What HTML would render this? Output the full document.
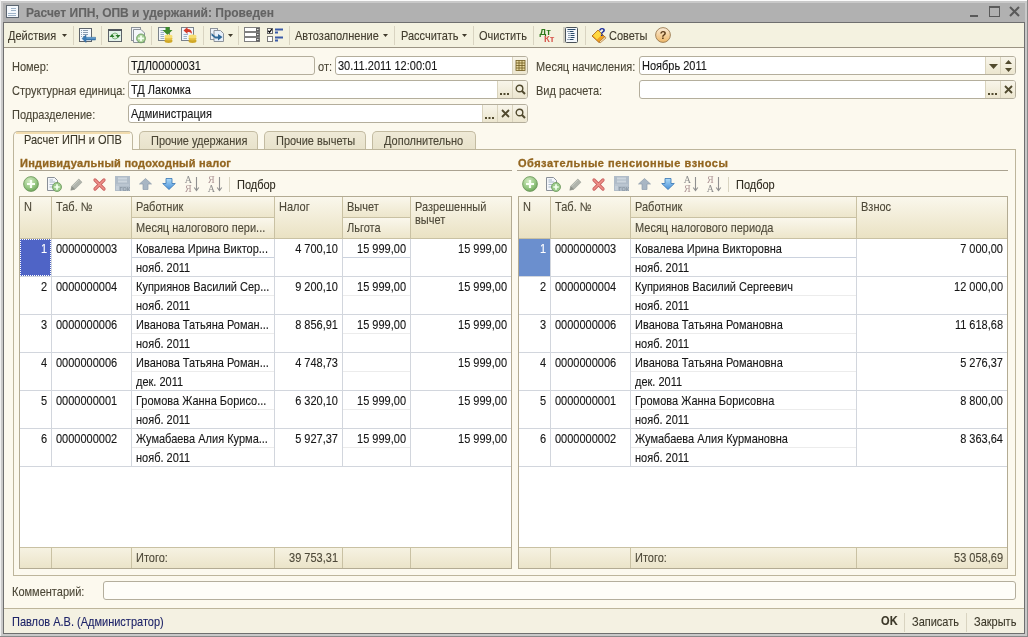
<!DOCTYPE html><html><head><meta charset="utf-8"><style>
*{margin:0;padding:0;box-sizing:border-box}
html,body{width:1028px;height:637px;overflow:hidden;background:#fff}
body{position:relative;font-family:"Liberation Sans",sans-serif;font-size:11px}
.t{position:absolute;white-space:nowrap;line-height:13px;font-size:11px;color:#4a4535}
.d{position:absolute;white-space:nowrap;line-height:13px;font-size:11px;color:#161616}
.h{position:absolute;white-space:nowrap;line-height:13px;font-size:11px;color:#4d4838}
.fld{position:absolute;height:19px;border:1px solid #b4ae9c;border-radius:3px;background:#fff;overflow:hidden}
.btn{position:absolute;top:0;bottom:0;width:15px;border-left:1px solid #d9d3bd;background:linear-gradient(#f8f5ea,#ece6cf)}
.sep{position:absolute;top:26px;width:1px;height:19px;background:#d9d4c1}
svg{position:absolute;overflow:visible}
#root{position:absolute;left:0;top:0;width:1028px;height:637px;will-change:transform}
#root div{-webkit-text-stroke-width:0.1px}
.t,.d,.h{transform:scaleY(1.1);transform-origin:0 0}
</style></head><body><div id="root">
<div style="position:absolute;left:0px;top:0px;width:1028px;height:637px;background:#d4d4d4"></div>
<div style="position:absolute;left:1px;top:1px;width:1026px;height:635px;background:#c9c9c9"></div>
<div style="position:absolute;left:3px;top:3px;width:1022px;height:20px;background:#b1b1b1"></div>
<div style="position:absolute;left:3px;top:22px;width:1022px;height:612px;background:#6f6f6f"></div>
<div style="position:absolute;left:4px;top:23px;width:1020px;height:610px;background:#fcf9ee"></div>
<div style="position:absolute;left:0px;top:0px;width:1028px;height:1px;background:#fafafa"></div>
<div style="position:absolute;left:0px;top:0px;width:1px;height:637px;background:#f0f0f0"></div>
<div style="position:absolute;left:1027px;top:0px;width:1px;height:637px;background:#8a8a8a"></div>
<div style="position:absolute;left:0px;top:636px;width:1028px;height:1px;background:#8a8a8a"></div>
<svg style="left:6px;top:5px" width="13" height="13" viewBox="0 0 13 13"><rect x="0.5" y="0.5" width="12" height="12" fill="#f4f8fc" stroke="#5c6670"/><g stroke="#9fb4c8" stroke-width="1"><line x1="5" y1="3.5" x2="10" y2="3.5"/><line x1="5" y1="5.5" x2="10" y2="5.5"/><line x1="2" y1="8.5" x2="10" y2="8.5"/><line x1="2" y1="10.5" x2="10" y2="10.5"/></g></svg>
<div style="position:absolute;left:26px;top:7px;font:bold 12px 'Liberation Sans';line-height:13px;color:#636363;white-space:nowrap;-webkit-text-stroke-width:0.1px">Расчет ИПН, ОПВ и удержаний: Проведен</div>
<svg style="left:970px;top:6px" width="50" height="12" viewBox="0 0 50 12"><rect x="0" y="9" width="8" height="2" fill="#5a5a5a"/><rect x="19.5" y="0.5" width="10" height="10" fill="none" stroke="#5a5a5a"/><rect x="19" y="0" width="11" height="2" fill="#5a5a5a"/><path d="M40 1 L49 10 M49 1 L40 10" stroke="#5a5a5a" stroke-width="2"/></svg>
<div style="position:absolute;left:4px;top:23px;width:1020px;height:24px;background:#f4f2e0"></div>
<div style="position:absolute;left:4px;top:47px;width:1020px;height:1px;background:#9c9584"></div>
<div class="t" style="left:8px;top:29px;color:#403b2c">Действия</div>
<svg style="left:62px;top:34px" width="5" height="3" viewBox="0 0 5 3"><path d="M0 0H5L2.5 3Z" fill="#403b2c"/></svg>
<div class="sep" style="left:73px"></div>
<div class="sep" style="left:101px"></div>
<div class="sep" style="left:151px"></div>
<div class="sep" style="left:203px"></div>
<div class="sep" style="left:238px"></div>
<div class="sep" style="left:289px"></div>
<div class="sep" style="left:394px"></div>
<div class="sep" style="left:473px"></div>
<div class="sep" style="left:533px"></div>
<div class="sep" style="left:585px"></div>
<div style="position:absolute;left:79px;top:28px"><svg style="left:0;top:0" width="17" height="15" viewBox="0 0 17 15"><rect x="0.5" y="0.5" width="12" height="13" fill="#f4f8fc" stroke="#5e646a"/><g stroke="#8a9cb0" stroke-dasharray="1 1 5 9"><line x1="2" y1="2.5" x2="10" y2="2.5"/><line x1="2" y1="4.5" x2="10" y2="4.5"/><line x1="2" y1="6.5" x2="10" y2="6.5"/><line x1="2" y1="8.5" x2="6" y2="8.5"/></g><path d="M3 10.5 L7 7 V9.3 H16.5 V12 H7 V14.5 Z" fill="#3a7ab4" stroke="#2c6496" stroke-width="0.5"/><rect x="7.5" y="9.5" width="8.5" height="1" fill="#7ab0d8"/></svg></div>
<div style="position:absolute;left:108px;top:29px"><svg style="left:0;top:0" width="14" height="13" viewBox="0 0 14 13"><rect x="0.5" y="0.5" width="13" height="12" fill="#e4f2ea" stroke="#5c6268"/><rect x="0" y="0" width="14" height="2" fill="#50565c"/><circle cx="7" cy="7" r="3" fill="#d8f0d4" stroke="#6aaa6a" stroke-width="0.8"/><path d="M1.5 8 L4 5 L6.5 8Z M7.5 6 L10 9 L12.5 6Z" fill="#2a7a2a"/></svg></div>
<div style="position:absolute;left:131px;top:27px"><svg style="left:0;top:0" width="16" height="16" viewBox="0 0 16 16"><rect x="0.5" y="0.5" width="9" height="13" fill="#eef1f6" stroke="#8c9299"/><path d="M2.5 2.5 H10 L13.5 6 V15.5 H2.5 Z" fill="#f4f6fa" stroke="#8c9299"/><circle cx="10" cy="11.4" r="4.4" fill="#a8d098" stroke="#6a9a5a" stroke-width="0.9"/><path d="M10 8.5V14.3M7.1 11.4H12.9" stroke="#f4fff0" stroke-width="1.8"/></svg></div>
<div style="position:absolute;left:158px;top:27px"><svg style="left:0;top:0" width="16" height="16" viewBox="0 0 16 16"><rect x="0.5" y="0.5" width="11" height="13" fill="#f2f6fb" stroke="#7a828a"/><g stroke="#9ab0c8"><line x1="2.5" y1="3.5" x2="7" y2="3.5"/><line x1="2.5" y1="5.5" x2="6" y2="5.5"/><line x1="2.5" y1="7.5" x2="6" y2="7.5"/><line x1="2.5" y1="9.5" x2="6" y2="9.5"/><line x1="2.5" y1="11.5" x2="6" y2="11.5"/></g><path d="M7.5 0 H11.5 V3 H14.5 L9.5 8 L4.5 3 H7.5Z" fill="#3c8a2c"/><ellipse cx="10.5" cy="14" rx="4" ry="1.9" fill="#d0a828"/><ellipse cx="10.5" cy="11.6" rx="4" ry="1.9" fill="#e4c040"/><ellipse cx="10.5" cy="9.4" rx="4" ry="1.9" fill="#f6de70"/></svg></div>
<div style="position:absolute;left:181px;top:27px"><svg style="left:0;top:0" width="16" height="16" viewBox="0 0 16 16"><rect x="0.5" y="0.5" width="12" height="13" fill="#f2f6fb" stroke="#7a828a"/><g stroke="#9ab0c8"><line x1="2.5" y1="7.5" x2="7" y2="7.5"/><line x1="2.5" y1="9.5" x2="6" y2="9.5"/><line x1="2.5" y1="11.5" x2="6" y2="11.5"/></g><path d="M2.5 3.5 L6.5 0 V2 C9.5 2 11 3.5 11 7 C10 5.5 8.8 5 6.5 5 V7 Z" fill="#d43a2a"/><ellipse cx="11.5" cy="14" rx="4" ry="1.9" fill="#d0a828"/><ellipse cx="11.5" cy="11.6" rx="4" ry="1.9" fill="#e4c040"/><ellipse cx="11.5" cy="9.4" rx="4" ry="1.9" fill="#f6de70"/></svg></div>
<div style="position:absolute;left:210px;top:28px"><svg style="left:0;top:0" width="15" height="14" viewBox="0 0 15 14"><rect x="0.5" y="0.5" width="7" height="11" fill="#eef2f8" stroke="#8c9299"/><path d="M4 2.5 H10.5 L13.5 5.5 V13.5 H4Z" fill="#e6eef8" stroke="#8c9299"/><path d="M1.5 5 L5.5 8.5 H8 V6 L12.5 9 L8 12.5 V10.5 H5.5 L1.5 7.5Z" fill="#2e6898"/></svg></div>
<div style="position:absolute;left:244px;top:27px"><svg style="left:0;top:0" width="16" height="15" viewBox="0 0 16 15"><g fill="#fff" stroke="#808080"><rect x="0.5" y="0.5" width="15" height="4"/><rect x="0.5" y="5.5" width="15" height="4"/><rect x="0.5" y="10.5" width="15" height="4"/></g><g fill="#606060"><rect x="12" y="1" width="3.5" height="3.5"/><rect x="12" y="6" width="3.5" height="3.5"/><rect x="12" y="11" width="3.5" height="3.5"/></g><g fill="#fff"><path d="M12.7 2H14.8L13.75 3.2Z"/><path d="M12.7 7H14.8L13.75 8.2Z"/><path d="M12.7 12H14.8L13.75 13.2Z"/></g></svg></div>
<div style="position:absolute;left:267px;top:28px"><svg style="left:0;top:0" width="16" height="14" viewBox="0 0 16 14"><rect x="0.5" y="0.5" width="5" height="5" fill="#fff" stroke="#6a6a6a"/><path d="M1.3 2.8 L2.6 4.3 L4.8 1.2" stroke="#000" stroke-width="1.3" fill="none"/><rect x="0.5" y="8.5" width="5" height="5" fill="#fff" stroke="#7a7a7a"/><g fill="#3a5aa8"><rect x="8" y="0.5" width="8" height="2"/><rect x="8" y="3.5" width="3" height="2"/><rect x="8" y="8.5" width="8" height="2"/><rect x="8" y="11.5" width="3" height="2"/></g></svg></div>
<div style="position:absolute;left:539px;top:27px"><svg style="left:0;top:0" width="17" height="16" viewBox="0 0 17 16"><text x="0.5" y="7.8" font-family="Liberation Sans" font-weight="bold" font-size="9.5" fill="#2f7a1c">Дт</text><text x="5" y="15" font-family="Liberation Sans" font-weight="bold" font-size="9.5" fill="#d85a50">Кт</text></svg></div>
<div style="position:absolute;left:563px;top:27px"><svg style="left:0;top:0" width="16" height="16" viewBox="0 0 16 16"><rect x="0" y="0" width="2" height="16" fill="#cfcdc0"/><rect x="2.5" y="0.5" width="12" height="15" rx="1" fill="#f4f8fc" stroke="#4a5258"/><g fill="#2a4a6a"><rect x="4.5" y="2" width="8" height="1"/><rect x="4.5" y="4" width="1" height="1"/><rect x="6.5" y="4" width="4" height="1"/><rect x="5.5" y="6" width="1" height="1"/><rect x="7.5" y="6" width="4" height="1"/><rect x="5.5" y="8" width="1" height="1"/><rect x="7.5" y="8" width="4" height="1"/><rect x="5.5" y="10" width="1" height="1"/><rect x="7.5" y="10" width="4" height="1"/><rect x="4.5" y="12" width="1" height="1"/><rect x="6.5" y="12" width="4" height="1"/></g></svg></div>
<div style="position:absolute;left:591px;top:26px"><svg style="left:0;top:0" width="17" height="17" viewBox="0 0 17 17"><path d="M1 10 L7 4 L14 11 L8 16.5 Z" fill="#f0a020" stroke="#a05a10" stroke-width="0.8"/><path d="M2 9.5 L7 4.5 L11 8.5 L6 13.5Z" fill="#ffd840"/><path d="M8 16 L14 10.5 L15 12 L9 17Z" fill="#f8e8c0" stroke="#a05a10" stroke-width="0.6"/><text x="7.5" y="10" font-family="Liberation Sans" font-weight="bold" font-size="11.5" fill="#1a2a9a">?</text></svg></div>
<div style="position:absolute;left:655px;top:27px"><svg style="left:0;top:0" width="16" height="16" viewBox="0 0 16 16"><defs><linearGradient id="hg" x1="0" y1="0" x2="0" y2="1"><stop offset="0" stop-color="#faecd8"/><stop offset="1" stop-color="#eeb868"/></linearGradient></defs><circle cx="8" cy="8" r="7.4" fill="url(#hg)" stroke="#9a7a50" stroke-width="0.9"/><text x="8" y="12" text-anchor="middle" font-family="Liberation Sans" font-weight="bold" font-size="11" fill="#5a3a18">?</text></svg></div>
<svg style="left:228px;top:34px" width="5" height="3" viewBox="0 0 5 3"><path d="M0 0H5L2.5 3Z" fill="#403b2c"/></svg>
<div class="t" style="left:295px;top:29px;color:#403b2c">Автозаполнение</div>
<svg style="left:383px;top:34px" width="5" height="3" viewBox="0 0 5 3"><path d="M0 0H5L2.5 3Z" fill="#403b2c"/></svg>
<div class="t" style="left:401px;top:29px;color:#403b2c">Рассчитать</div>
<svg style="left:462px;top:34px" width="5" height="3" viewBox="0 0 5 3"><path d="M0 0H5L2.5 3Z" fill="#403b2c"/></svg>
<div class="t" style="left:479px;top:29px;color:#403b2c">Очистить</div>
<div class="t" style="left:609px;top:29px;color:#403b2c">Советы</div>
<div class="t" style="left:12px;top:60px;">Номер:</div>
<div class="t" style="left:12px;top:84px;">Структурная единица:</div>
<div class="t" style="left:12px;top:108px;">Подразделение:</div>
<div class="t" style="left:318px;top:60px;">от:</div>
<div class="t" style="left:536px;top:60px;">Месяц начисления:</div>
<div class="t" style="left:536px;top:84px;">Вид расчета:</div>
<div class="fld" style="left:128px;top:56px;width:187px;background:#fbf8ef">
<div class="d" style="left:2px;top:2px">ТДЛ00000031</div>
</div>
<div class="fld" style="left:335px;top:56px;width:193px;background:#fff">
<div class="d" style="left:2px;top:2px">30.11.2011 12:00:01</div>
<div class="btn" style="left:176px"><svg style="left:2px;top:3px" width="11" height="11" viewBox="0 0 11 11"><rect x="1" y="0.5" width="9" height="10" fill="#e8d9a0" stroke="#6f5a20" stroke-width="0.8"/><g stroke="#6f5a20" stroke-width="0.8"><line x1="1" y1="3" x2="10" y2="3"/><line x1="1" y1="5.5" x2="10" y2="5.5"/><line x1="1" y1="8" x2="10" y2="8"/><line x1="4" y1="0.5" x2="4" y2="10.5"/><line x1="7" y1="0.5" x2="7" y2="10.5"/></g></svg></div>
</div>
<div class="fld" style="left:128px;top:80px;width:400px;background:#fff">
<div class="d" style="left:2px;top:2px">ТД Лакомка</div>
<div class="btn" style="left:383px"><svg style="left:2px;top:3px" width="11" height="11" viewBox="0 0 11 11"><circle cx="4.5" cy="4.5" r="3.3" fill="none" stroke="#514a2e" stroke-width="1.4"/><path d="M7 7L10 10" stroke="#514a2e" stroke-width="2"/></svg></div>
<div class="btn" style="left:368px"><svg style="left:2px;top:12px" width="9" height="2"><rect x="0" y="0" width="2" height="2" fill="#514a2e"/><rect x="3.5" y="0" width="2" height="2" fill="#514a2e"/><rect x="7" y="0" width="2" height="2" fill="#514a2e"/></svg></div>
</div>
<div class="fld" style="left:128px;top:104px;width:400px;background:#fff">
<div class="d" style="left:2px;top:2px">Администрация</div>
<div class="btn" style="left:383px"><svg style="left:2px;top:3px" width="11" height="11" viewBox="0 0 11 11"><circle cx="4.5" cy="4.5" r="3.3" fill="none" stroke="#514a2e" stroke-width="1.4"/><path d="M7 7L10 10" stroke="#514a2e" stroke-width="2"/></svg></div>
<div class="btn" style="left:368px"><svg style="left:3px;top:4px" width="9" height="9" viewBox="0 0 9 9"><path d="M1 1L8 8M8 1L1 8" stroke="#514a2e" stroke-width="1.8"/></svg></div>
<div class="btn" style="left:353px"><svg style="left:2px;top:12px" width="9" height="2"><rect x="0" y="0" width="2" height="2" fill="#514a2e"/><rect x="3.5" y="0" width="2" height="2" fill="#514a2e"/><rect x="7" y="0" width="2" height="2" fill="#514a2e"/></svg></div>
</div>
<div class="fld" style="left:639px;top:56px;width:377px;background:#fff">
<div class="d" style="left:2px;top:2px">Ноябрь 2011</div>
<div class="btn" style="left:360px"><svg style="left:4px;top:3px" width="7" height="12" viewBox="0 0 7 12"><path d="M0 4H7L3.5 0Z M0 8H7L3.5 12Z" fill="#514a2e"/></svg></div>
<div class="btn" style="left:345px"><svg style="left:3px;top:7px" width="9" height="5" viewBox="0 0 9 5"><path d="M0 0H9L4.5 5Z" fill="#514a2e"/></svg></div>
</div>
<div class="fld" style="left:639px;top:80px;width:377px;background:#fff">
<div class="btn" style="left:360px"><svg style="left:3px;top:4px" width="9" height="9" viewBox="0 0 9 9"><path d="M1 1L8 8M8 1L1 8" stroke="#514a2e" stroke-width="1.8"/></svg></div>
<div class="btn" style="left:345px"><svg style="left:2px;top:12px" width="9" height="2"><rect x="0" y="0" width="2" height="2" fill="#514a2e"/><rect x="3.5" y="0" width="2" height="2" fill="#514a2e"/><rect x="7" y="0" width="2" height="2" fill="#514a2e"/></svg></div>
</div>
<div style="position:absolute;left:13px;top:149px;width:1003px;height:427px;border:1px solid #bdb59b;background:#fcf9ee"></div>
<div style="position:absolute;left:139px;top:131px;width:119px;height:18px;border:1px solid #c3bba1;border-bottom:none;border-radius:5px 5px 0 0;background:linear-gradient(#efead7,#e8e2cb)"></div>
<div class="t" style="left:151px;top:134px;color:#4a4535">Прочие удержания</div>
<div style="position:absolute;left:264px;top:131px;width:102px;height:18px;border:1px solid #c3bba1;border-bottom:none;border-radius:5px 5px 0 0;background:linear-gradient(#efead7,#e8e2cb)"></div>
<div class="t" style="left:276px;top:134px;color:#4a4535">Прочие вычеты</div>
<div style="position:absolute;left:372px;top:131px;width:104px;height:18px;border:1px solid #c3bba1;border-bottom:none;border-radius:5px 5px 0 0;background:linear-gradient(#efead7,#e8e2cb)"></div>
<div class="t" style="left:384px;top:134px;color:#4a4535">Дополнительно</div>
<div style="position:absolute;left:13px;top:131px;width:120px;height:19px;border:1px solid #bfb79e;border-bottom:none;border-radius:5px 5px 0 0;background:#fcf9ee"></div>
<div style="position:absolute;left:16px;top:132px;width:114px;height:2px;background:#f2dcae"></div>
<div class="t" style="left:24px;top:133px;color:#3c3829">Расчет ИПН и ОПВ</div>
<div style="position:absolute;left:20px;top:157px;font:bold 11px 'Liberation Sans';line-height:13px;color:#936620;white-space:nowrap;letter-spacing:0.25px;-webkit-text-stroke-width:0.3px">Индивидуальный подоходный налог</div>
<div style="position:absolute;left:19px;top:170px;width:493px;height:1px;background:#aaa290"></div>
<div style="position:absolute;left:518px;top:157px;font:bold 11px 'Liberation Sans';line-height:13px;color:#936620;white-space:nowrap;letter-spacing:0.5px;-webkit-text-stroke-width:0.3px">Обязательные пенсионные взносы</div>
<div style="position:absolute;left:517px;top:170px;width:491px;height:1px;background:#aaa290"></div>
<div style="position:absolute;left:23px;top:176px"><svg style="left:0;top:0" width="16" height="16" viewBox="0 0 16 16"><defs><radialGradient id="pg0" cx="0.4" cy="0.3" r="0.75"><stop offset="0" stop-color="#d4ecc4"/><stop offset="0.6" stop-color="#98c884"/><stop offset="1" stop-color="#6aa258"/></radialGradient></defs><circle cx="8" cy="8" r="7.4" fill="url(#pg0)" stroke="#6a9458" stroke-width="0.8"/><path d="M8 4V12M4 8H12" stroke="#f8fff4" stroke-width="2.2"/></svg></div>
<div style="position:absolute;left:47px;top:177px"><svg style="left:0;top:0" width="15" height="15" viewBox="0 0 15 15"><path d="M0.5 0.5H7.5L10.5 3.5V13.5H0.5Z" fill="#f4f6fa" stroke="#8a9098"/><g stroke="#a8b8c8"><line x1="2.5" y1="3" x2="6" y2="3"/><line x1="2.5" y1="5" x2="8" y2="5"/><line x1="2.5" y1="7.5" x2="6" y2="7.5"/><line x1="2.5" y1="10" x2="6" y2="10"/></g><circle cx="10" cy="10" r="4.5" fill="#9ccc8c" stroke="#6a9458" stroke-width="0.8"/><path d="M10 7.3V12.7M7.3 10H12.7" stroke="#f4fff0" stroke-width="1.7"/></svg></div>
<div style="position:absolute;left:70px;top:178px"><svg style="left:0;top:0" width="13" height="13" viewBox="0 0 13 13"><path d="M0.8 12.2 L1.8 8 L8.8 1 L12 4.2 L5 11.2 Z" fill="#b0b4ac" stroke="#9a9e96" stroke-width="0.6"/><path d="M0.8 12.2L1.8 8L5 11.2Z" fill="#8e928a"/><path d="M2.5 8.5L9 2" stroke="#c8ccc4" stroke-width="0.8"/></svg></div>
<div style="position:absolute;left:93px;top:178px"><svg style="left:0;top:0" width="13" height="13" viewBox="0 0 13 13"><path d="M2 2L11 11M11 2L2 11" stroke="#c86060" stroke-width="3.2" stroke-linecap="round"/><path d="M2 2L11 11M11 2L2 11" stroke="#f09088" stroke-width="1.6" stroke-linecap="round"/></svg></div>
<div style="position:absolute;left:115px;top:176px"><svg style="left:0;top:0" width="15" height="15" viewBox="0 0 15 15"><rect x="0" y="0" width="15" height="15" fill="#b0bcc8"/><rect x="3" y="1.5" width="9" height="5" fill="#cdd6de"/><rect x="3" y="3.5" width="9" height="1" fill="#b0bcc8"/><rect x="1" y="8.5" width="13" height="1" fill="#c4ced8"/><rect x="1" y="10" width="3" height="4" fill="#c4ced8"/><text x="4.5" y="14.5" font-family="Liberation Sans" font-weight="bold" font-size="5.5" fill="#8c98a4">ГОК</text></svg></div>
<div style="position:absolute;left:139px;top:178px"><svg style="left:0;top:0" width="13" height="12" viewBox="0 0 13 12"><path d="M6.5 0.5L12.5 6H9V11.5H4V6H0.5Z" fill="#a8b6c4" stroke="#8e9cac" stroke-width="0.7"/></svg></div>
<div style="position:absolute;left:162px;top:178px"><svg style="left:0;top:0" width="14" height="12" viewBox="0 0 14 12"><defs><linearGradient id="dg0" x1="0" y1="0" x2="0" y2="1"><stop offset="0" stop-color="#b0dcf8"/><stop offset="1" stop-color="#4890d8"/></linearGradient></defs><path d="M4 0.5H10V5.5H13.3L7 11.5L0.7 5.5H4Z" fill="url(#dg0)" stroke="#3474b4" stroke-width="0.8"/></svg></div>
<div style="position:absolute;left:185px;top:176px"><svg style="left:0;top:0" width="14" height="16" viewBox="0 0 14 16"><text x="-0.3" y="7.3" font-family="Liberation Serif" font-size="10" fill="#8c8c8c">A</text><text x="0" y="15.5" font-family="Liberation Serif" font-size="10" fill="#b09898">Я</text><path d="M11.5 1V14M9.2 11.5L11.5 14.5L13.8 11.5" stroke="#909090" stroke-width="1.1" fill="none"/></svg></div>
<div style="position:absolute;left:208px;top:176px"><svg style="left:0;top:0" width="14" height="16" viewBox="0 0 14 16"><text x="0" y="7.3" font-family="Liberation Serif" font-size="10" fill="#b09898">Я</text><text x="-0.3" y="15.5" font-family="Liberation Serif" font-size="10" fill="#8c8c8c">A</text><path d="M11.5 1V14M9.2 11.5L11.5 14.5L13.8 11.5" stroke="#909090" stroke-width="1.1" fill="none"/></svg></div>
<div class="sep" style="left:229px;top:177px;height:15px"></div>
<div class="t" style="left:237px;top:178px;color:#2f2b20">Подбор</div>
<div style="position:absolute;left:522px;top:176px"><svg style="left:0;top:0" width="16" height="16" viewBox="0 0 16 16"><defs><radialGradient id="pg499" cx="0.4" cy="0.3" r="0.75"><stop offset="0" stop-color="#d4ecc4"/><stop offset="0.6" stop-color="#98c884"/><stop offset="1" stop-color="#6aa258"/></radialGradient></defs><circle cx="8" cy="8" r="7.4" fill="url(#pg499)" stroke="#6a9458" stroke-width="0.8"/><path d="M8 4V12M4 8H12" stroke="#f8fff4" stroke-width="2.2"/></svg></div>
<div style="position:absolute;left:546px;top:177px"><svg style="left:0;top:0" width="15" height="15" viewBox="0 0 15 15"><path d="M0.5 0.5H7.5L10.5 3.5V13.5H0.5Z" fill="#f4f6fa" stroke="#8a9098"/><g stroke="#a8b8c8"><line x1="2.5" y1="3" x2="6" y2="3"/><line x1="2.5" y1="5" x2="8" y2="5"/><line x1="2.5" y1="7.5" x2="6" y2="7.5"/><line x1="2.5" y1="10" x2="6" y2="10"/></g><circle cx="10" cy="10" r="4.5" fill="#9ccc8c" stroke="#6a9458" stroke-width="0.8"/><path d="M10 7.3V12.7M7.3 10H12.7" stroke="#f4fff0" stroke-width="1.7"/></svg></div>
<div style="position:absolute;left:569px;top:178px"><svg style="left:0;top:0" width="13" height="13" viewBox="0 0 13 13"><path d="M0.8 12.2 L1.8 8 L8.8 1 L12 4.2 L5 11.2 Z" fill="#b0b4ac" stroke="#9a9e96" stroke-width="0.6"/><path d="M0.8 12.2L1.8 8L5 11.2Z" fill="#8e928a"/><path d="M2.5 8.5L9 2" stroke="#c8ccc4" stroke-width="0.8"/></svg></div>
<div style="position:absolute;left:592px;top:178px"><svg style="left:0;top:0" width="13" height="13" viewBox="0 0 13 13"><path d="M2 2L11 11M11 2L2 11" stroke="#c86060" stroke-width="3.2" stroke-linecap="round"/><path d="M2 2L11 11M11 2L2 11" stroke="#f09088" stroke-width="1.6" stroke-linecap="round"/></svg></div>
<div style="position:absolute;left:614px;top:176px"><svg style="left:0;top:0" width="15" height="15" viewBox="0 0 15 15"><rect x="0" y="0" width="15" height="15" fill="#b0bcc8"/><rect x="3" y="1.5" width="9" height="5" fill="#cdd6de"/><rect x="3" y="3.5" width="9" height="1" fill="#b0bcc8"/><rect x="1" y="8.5" width="13" height="1" fill="#c4ced8"/><rect x="1" y="10" width="3" height="4" fill="#c4ced8"/><text x="4.5" y="14.5" font-family="Liberation Sans" font-weight="bold" font-size="5.5" fill="#8c98a4">ГОК</text></svg></div>
<div style="position:absolute;left:638px;top:178px"><svg style="left:0;top:0" width="13" height="12" viewBox="0 0 13 12"><path d="M6.5 0.5L12.5 6H9V11.5H4V6H0.5Z" fill="#a8b6c4" stroke="#8e9cac" stroke-width="0.7"/></svg></div>
<div style="position:absolute;left:661px;top:178px"><svg style="left:0;top:0" width="14" height="12" viewBox="0 0 14 12"><defs><linearGradient id="dg499" x1="0" y1="0" x2="0" y2="1"><stop offset="0" stop-color="#b0dcf8"/><stop offset="1" stop-color="#4890d8"/></linearGradient></defs><path d="M4 0.5H10V5.5H13.3L7 11.5L0.7 5.5H4Z" fill="url(#dg499)" stroke="#3474b4" stroke-width="0.8"/></svg></div>
<div style="position:absolute;left:684px;top:176px"><svg style="left:0;top:0" width="14" height="16" viewBox="0 0 14 16"><text x="-0.3" y="7.3" font-family="Liberation Serif" font-size="10" fill="#8c8c8c">A</text><text x="0" y="15.5" font-family="Liberation Serif" font-size="10" fill="#b09898">Я</text><path d="M11.5 1V14M9.2 11.5L11.5 14.5L13.8 11.5" stroke="#909090" stroke-width="1.1" fill="none"/></svg></div>
<div style="position:absolute;left:707px;top:176px"><svg style="left:0;top:0" width="14" height="16" viewBox="0 0 14 16"><text x="0" y="7.3" font-family="Liberation Serif" font-size="10" fill="#b09898">Я</text><text x="-0.3" y="15.5" font-family="Liberation Serif" font-size="10" fill="#8c8c8c">A</text><path d="M11.5 1V14M9.2 11.5L11.5 14.5L13.8 11.5" stroke="#909090" stroke-width="1.1" fill="none"/></svg></div>
<div class="sep" style="left:728px;top:177px;height:15px"></div>
<div class="t" style="left:736px;top:178px;color:#2f2b20">Подбор</div>
<div style="position:absolute;left:19px;top:196px;width:493px;height:373px;background:#fff;border:1px solid #b3ab93"></div>
<div style="position:absolute;left:20px;top:197px;width:31px;height:41px;background:linear-gradient(#faf7ec,#eae2c3)"></div>
<div class="h" style="left:24px;top:200px;">N</div>
<div style="position:absolute;left:52px;top:197px;width:79px;height:41px;background:linear-gradient(#faf7ec,#eae2c3)"></div>
<div class="h" style="left:56px;top:200px;">Таб. №</div>
<div style="position:absolute;left:51px;top:197px;width:1px;height:41px;background:#c9c1a3"></div>
<div style="position:absolute;left:132px;top:197px;width:142px;height:20px;background:linear-gradient(#faf7ec,#ede6cb)"></div>
<div style="position:absolute;left:132px;top:217px;width:142px;height:1px;background:#c9c1a3"></div>
<div style="position:absolute;left:132px;top:218px;width:142px;height:20px;background:linear-gradient(#faf7ec,#ede6cb)"></div>
<div class="h" style="left:136px;top:200px;">Работник</div>
<div class="h" style="left:136px;top:221px;">Месяц налогового пери...</div>
<div style="position:absolute;left:131px;top:197px;width:1px;height:41px;background:#c9c1a3"></div>
<div style="position:absolute;left:275px;top:197px;width:67px;height:41px;background:linear-gradient(#faf7ec,#eae2c3)"></div>
<div class="h" style="left:279px;top:200px;">Налог</div>
<div style="position:absolute;left:274px;top:197px;width:1px;height:41px;background:#c9c1a3"></div>
<div style="position:absolute;left:343px;top:197px;width:67px;height:20px;background:linear-gradient(#faf7ec,#ede6cb)"></div>
<div style="position:absolute;left:343px;top:217px;width:67px;height:1px;background:#c9c1a3"></div>
<div style="position:absolute;left:343px;top:218px;width:67px;height:20px;background:linear-gradient(#faf7ec,#ede6cb)"></div>
<div class="h" style="left:347px;top:200px;">Вычет</div>
<div class="h" style="left:347px;top:221px;">Льгота</div>
<div style="position:absolute;left:342px;top:197px;width:1px;height:41px;background:#c9c1a3"></div>
<div style="position:absolute;left:411px;top:197px;width:100px;height:41px;background:linear-gradient(#faf7ec,#eae2c3)"></div>
<div class="h" style="left:415px;top:200px;">Разрешенный</div>
<div class="h" style="left:415px;top:213px;">вычет</div>
<div style="position:absolute;left:410px;top:197px;width:1px;height:41px;background:#c9c1a3"></div>
<div style="position:absolute;left:20px;top:238px;width:491px;height:1px;background:#c9c1a3"></div>
<div style="position:absolute;left:51px;top:239px;width:1px;height:38px;background:#d2d6dd"></div>
<div style="position:absolute;left:131px;top:239px;width:1px;height:38px;background:#d2d6dd"></div>
<div style="position:absolute;left:274px;top:239px;width:1px;height:38px;background:#d2d6dd"></div>
<div style="position:absolute;left:342px;top:239px;width:1px;height:38px;background:#d2d6dd"></div>
<div style="position:absolute;left:410px;top:239px;width:1px;height:38px;background:#d2d6dd"></div>
<div style="position:absolute;left:20px;top:276px;width:491px;height:1px;background:#d2d6dd"></div>
<div style="position:absolute;left:20px;top:239px;width:31px;height:37px;background:#4f64c6;outline:1px dotted #fff;outline-offset:-1px"></div>
<div class="d" style="right:981px;top:242px;text-align:right;color:#fff">1</div>
<div class="d" style="left:56px;top:242px;">0000000003</div>
<div style="position:absolute;left:132px;top:257px;width:142px;height:1px;background:#cbd2de"></div>
<div class="d" style="left:136px;top:242px;width:136px;overflow:hidden">Ковалева Ирина Виктор...</div>
<div class="d" style="left:136px;top:261px;width:136px;overflow:hidden">нояб. 2011</div>
<div class="d" style="right:690px;top:242px;text-align:right;">4 700,10</div>
<div style="position:absolute;left:343px;top:257px;width:67px;height:1px;background:#cbd2de"></div>
<div class="d" style="right:622px;top:242px;text-align:right;">15 999,00</div>
<div class="d" style="right:521px;top:242px;text-align:right;">15 999,00</div>
<div style="position:absolute;left:51px;top:277px;width:1px;height:38px;background:#d2d6dd"></div>
<div style="position:absolute;left:131px;top:277px;width:1px;height:38px;background:#d2d6dd"></div>
<div style="position:absolute;left:274px;top:277px;width:1px;height:38px;background:#d2d6dd"></div>
<div style="position:absolute;left:342px;top:277px;width:1px;height:38px;background:#d2d6dd"></div>
<div style="position:absolute;left:410px;top:277px;width:1px;height:38px;background:#d2d6dd"></div>
<div style="position:absolute;left:20px;top:314px;width:491px;height:1px;background:#d2d6dd"></div>
<div class="d" style="right:981px;top:280px;text-align:right;">2</div>
<div class="d" style="left:56px;top:280px;">0000000004</div>
<div style="position:absolute;left:132px;top:295px;width:142px;height:1px;background:#ececec"></div>
<div class="d" style="left:136px;top:280px;width:136px;overflow:hidden">Куприянов Василий Сер...</div>
<div class="d" style="left:136px;top:299px;width:136px;overflow:hidden">нояб. 2011</div>
<div class="d" style="right:690px;top:280px;text-align:right;">9 200,10</div>
<div style="position:absolute;left:343px;top:295px;width:67px;height:1px;background:#ececec"></div>
<div class="d" style="right:622px;top:280px;text-align:right;">15 999,00</div>
<div class="d" style="right:521px;top:280px;text-align:right;">15 999,00</div>
<div style="position:absolute;left:51px;top:315px;width:1px;height:38px;background:#d2d6dd"></div>
<div style="position:absolute;left:131px;top:315px;width:1px;height:38px;background:#d2d6dd"></div>
<div style="position:absolute;left:274px;top:315px;width:1px;height:38px;background:#d2d6dd"></div>
<div style="position:absolute;left:342px;top:315px;width:1px;height:38px;background:#d2d6dd"></div>
<div style="position:absolute;left:410px;top:315px;width:1px;height:38px;background:#d2d6dd"></div>
<div style="position:absolute;left:20px;top:352px;width:491px;height:1px;background:#d2d6dd"></div>
<div class="d" style="right:981px;top:318px;text-align:right;">3</div>
<div class="d" style="left:56px;top:318px;">0000000006</div>
<div style="position:absolute;left:132px;top:333px;width:142px;height:1px;background:#ececec"></div>
<div class="d" style="left:136px;top:318px;width:136px;overflow:hidden">Иванова Татьяна Роман...</div>
<div class="d" style="left:136px;top:337px;width:136px;overflow:hidden">нояб. 2011</div>
<div class="d" style="right:690px;top:318px;text-align:right;">8 856,91</div>
<div style="position:absolute;left:343px;top:333px;width:67px;height:1px;background:#ececec"></div>
<div class="d" style="right:622px;top:318px;text-align:right;">15 999,00</div>
<div class="d" style="right:521px;top:318px;text-align:right;">15 999,00</div>
<div style="position:absolute;left:51px;top:353px;width:1px;height:38px;background:#d2d6dd"></div>
<div style="position:absolute;left:131px;top:353px;width:1px;height:38px;background:#d2d6dd"></div>
<div style="position:absolute;left:274px;top:353px;width:1px;height:38px;background:#d2d6dd"></div>
<div style="position:absolute;left:342px;top:353px;width:1px;height:38px;background:#d2d6dd"></div>
<div style="position:absolute;left:410px;top:353px;width:1px;height:38px;background:#d2d6dd"></div>
<div style="position:absolute;left:20px;top:390px;width:491px;height:1px;background:#d2d6dd"></div>
<div class="d" style="right:981px;top:356px;text-align:right;">4</div>
<div class="d" style="left:56px;top:356px;">0000000006</div>
<div style="position:absolute;left:132px;top:371px;width:142px;height:1px;background:#ececec"></div>
<div class="d" style="left:136px;top:356px;width:136px;overflow:hidden">Иванова Татьяна Роман...</div>
<div class="d" style="left:136px;top:375px;width:136px;overflow:hidden">дек. 2011</div>
<div class="d" style="right:690px;top:356px;text-align:right;">4 748,73</div>
<div style="position:absolute;left:343px;top:371px;width:67px;height:1px;background:#ececec"></div>
<div class="d" style="right:521px;top:356px;text-align:right;">15 999,00</div>
<div style="position:absolute;left:51px;top:391px;width:1px;height:38px;background:#d2d6dd"></div>
<div style="position:absolute;left:131px;top:391px;width:1px;height:38px;background:#d2d6dd"></div>
<div style="position:absolute;left:274px;top:391px;width:1px;height:38px;background:#d2d6dd"></div>
<div style="position:absolute;left:342px;top:391px;width:1px;height:38px;background:#d2d6dd"></div>
<div style="position:absolute;left:410px;top:391px;width:1px;height:38px;background:#d2d6dd"></div>
<div style="position:absolute;left:20px;top:428px;width:491px;height:1px;background:#d2d6dd"></div>
<div class="d" style="right:981px;top:394px;text-align:right;">5</div>
<div class="d" style="left:56px;top:394px;">0000000001</div>
<div style="position:absolute;left:132px;top:409px;width:142px;height:1px;background:#ececec"></div>
<div class="d" style="left:136px;top:394px;width:136px;overflow:hidden">Громова Жанна Борисо...</div>
<div class="d" style="left:136px;top:413px;width:136px;overflow:hidden">нояб. 2011</div>
<div class="d" style="right:690px;top:394px;text-align:right;">6 320,10</div>
<div style="position:absolute;left:343px;top:409px;width:67px;height:1px;background:#ececec"></div>
<div class="d" style="right:622px;top:394px;text-align:right;">15 999,00</div>
<div class="d" style="right:521px;top:394px;text-align:right;">15 999,00</div>
<div style="position:absolute;left:51px;top:429px;width:1px;height:38px;background:#d2d6dd"></div>
<div style="position:absolute;left:131px;top:429px;width:1px;height:38px;background:#d2d6dd"></div>
<div style="position:absolute;left:274px;top:429px;width:1px;height:38px;background:#d2d6dd"></div>
<div style="position:absolute;left:342px;top:429px;width:1px;height:38px;background:#d2d6dd"></div>
<div style="position:absolute;left:410px;top:429px;width:1px;height:38px;background:#d2d6dd"></div>
<div style="position:absolute;left:20px;top:466px;width:491px;height:1px;background:#d2d6dd"></div>
<div class="d" style="right:981px;top:432px;text-align:right;">6</div>
<div class="d" style="left:56px;top:432px;">0000000002</div>
<div style="position:absolute;left:132px;top:447px;width:142px;height:1px;background:#ececec"></div>
<div class="d" style="left:136px;top:432px;width:136px;overflow:hidden">Жумабаева Алия Курма...</div>
<div class="d" style="left:136px;top:451px;width:136px;overflow:hidden">нояб. 2011</div>
<div class="d" style="right:690px;top:432px;text-align:right;">5 927,37</div>
<div style="position:absolute;left:343px;top:447px;width:67px;height:1px;background:#ececec"></div>
<div class="d" style="right:622px;top:432px;text-align:right;">15 999,00</div>
<div class="d" style="right:521px;top:432px;text-align:right;">15 999,00</div>
<div style="position:absolute;left:20px;top:547px;width:491px;height:1px;background:#c9c1a3"></div>
<div style="position:absolute;left:20px;top:548px;width:31px;height:20px;background:linear-gradient(#f6f2e2,#ebe4c9)"></div>
<div style="position:absolute;left:52px;top:548px;width:79px;height:20px;background:linear-gradient(#f6f2e2,#ebe4c9)"></div>
<div style="position:absolute;left:51px;top:548px;width:1px;height:20px;background:#c9c1a3"></div>
<div style="position:absolute;left:132px;top:548px;width:142px;height:20px;background:linear-gradient(#f6f2e2,#ebe4c9)"></div>
<div style="position:absolute;left:131px;top:548px;width:1px;height:20px;background:#c9c1a3"></div>
<div style="position:absolute;left:275px;top:548px;width:67px;height:20px;background:linear-gradient(#f6f2e2,#ebe4c9)"></div>
<div style="position:absolute;left:274px;top:548px;width:1px;height:20px;background:#c9c1a3"></div>
<div style="position:absolute;left:343px;top:548px;width:67px;height:20px;background:linear-gradient(#f6f2e2,#ebe4c9)"></div>
<div style="position:absolute;left:342px;top:548px;width:1px;height:20px;background:#c9c1a3"></div>
<div style="position:absolute;left:411px;top:548px;width:100px;height:20px;background:linear-gradient(#f6f2e2,#ebe4c9)"></div>
<div style="position:absolute;left:410px;top:548px;width:1px;height:20px;background:#c9c1a3"></div>
<div class="h" style="left:136px;top:551px;">Итого:</div>
<div class="h" style="right:690px;top:551px;text-align:right;">39 753,31</div>
<div style="position:absolute;left:518px;top:196px;width:490px;height:373px;background:#fff;border:1px solid #b3ab93"></div>
<div style="position:absolute;left:519px;top:197px;width:31px;height:41px;background:linear-gradient(#faf7ec,#eae2c3)"></div>
<div class="h" style="left:523px;top:200px;">N</div>
<div style="position:absolute;left:551px;top:197px;width:79px;height:41px;background:linear-gradient(#faf7ec,#eae2c3)"></div>
<div class="h" style="left:555px;top:200px;">Таб. №</div>
<div style="position:absolute;left:550px;top:197px;width:1px;height:41px;background:#c9c1a3"></div>
<div style="position:absolute;left:631px;top:197px;width:225px;height:20px;background:linear-gradient(#faf7ec,#ede6cb)"></div>
<div style="position:absolute;left:631px;top:217px;width:225px;height:1px;background:#c9c1a3"></div>
<div style="position:absolute;left:631px;top:218px;width:225px;height:20px;background:linear-gradient(#faf7ec,#ede6cb)"></div>
<div class="h" style="left:635px;top:200px;">Работник</div>
<div class="h" style="left:635px;top:221px;">Месяц налогового периода</div>
<div style="position:absolute;left:630px;top:197px;width:1px;height:41px;background:#c9c1a3"></div>
<div style="position:absolute;left:857px;top:197px;width:150px;height:41px;background:linear-gradient(#faf7ec,#eae2c3)"></div>
<div class="h" style="left:861px;top:200px;">Взнос</div>
<div style="position:absolute;left:856px;top:197px;width:1px;height:41px;background:#c9c1a3"></div>
<div style="position:absolute;left:519px;top:238px;width:488px;height:1px;background:#c9c1a3"></div>
<div style="position:absolute;left:550px;top:239px;width:1px;height:38px;background:#d2d6dd"></div>
<div style="position:absolute;left:630px;top:239px;width:1px;height:38px;background:#d2d6dd"></div>
<div style="position:absolute;left:856px;top:239px;width:1px;height:38px;background:#d2d6dd"></div>
<div style="position:absolute;left:519px;top:276px;width:488px;height:1px;background:#d2d6dd"></div>
<div style="position:absolute;left:519px;top:239px;width:31px;height:37px;background:#6b8fce"></div>
<div class="d" style="right:482px;top:242px;text-align:right;color:#fff">1</div>
<div class="d" style="left:555px;top:242px;">0000000003</div>
<div style="position:absolute;left:631px;top:257px;width:225px;height:1px;background:#cbd2de"></div>
<div class="d" style="left:635px;top:242px;width:219px;overflow:hidden">Ковалева Ирина Викторовна</div>
<div class="d" style="left:635px;top:261px;width:219px;overflow:hidden">нояб. 2011</div>
<div class="d" style="right:25px;top:242px;text-align:right;">7 000,00</div>
<div style="position:absolute;left:550px;top:277px;width:1px;height:38px;background:#d2d6dd"></div>
<div style="position:absolute;left:630px;top:277px;width:1px;height:38px;background:#d2d6dd"></div>
<div style="position:absolute;left:856px;top:277px;width:1px;height:38px;background:#d2d6dd"></div>
<div style="position:absolute;left:519px;top:314px;width:488px;height:1px;background:#d2d6dd"></div>
<div class="d" style="right:482px;top:280px;text-align:right;">2</div>
<div class="d" style="left:555px;top:280px;">0000000004</div>
<div style="position:absolute;left:631px;top:295px;width:225px;height:1px;background:#ececec"></div>
<div class="d" style="left:635px;top:280px;width:219px;overflow:hidden">Куприянов Василий Сергеевич</div>
<div class="d" style="left:635px;top:299px;width:219px;overflow:hidden">нояб. 2011</div>
<div class="d" style="right:25px;top:280px;text-align:right;">12 000,00</div>
<div style="position:absolute;left:550px;top:315px;width:1px;height:38px;background:#d2d6dd"></div>
<div style="position:absolute;left:630px;top:315px;width:1px;height:38px;background:#d2d6dd"></div>
<div style="position:absolute;left:856px;top:315px;width:1px;height:38px;background:#d2d6dd"></div>
<div style="position:absolute;left:519px;top:352px;width:488px;height:1px;background:#d2d6dd"></div>
<div class="d" style="right:482px;top:318px;text-align:right;">3</div>
<div class="d" style="left:555px;top:318px;">0000000006</div>
<div style="position:absolute;left:631px;top:333px;width:225px;height:1px;background:#ececec"></div>
<div class="d" style="left:635px;top:318px;width:219px;overflow:hidden">Иванова Татьяна Романовна</div>
<div class="d" style="left:635px;top:337px;width:219px;overflow:hidden">нояб. 2011</div>
<div class="d" style="right:25px;top:318px;text-align:right;">11 618,68</div>
<div style="position:absolute;left:550px;top:353px;width:1px;height:38px;background:#d2d6dd"></div>
<div style="position:absolute;left:630px;top:353px;width:1px;height:38px;background:#d2d6dd"></div>
<div style="position:absolute;left:856px;top:353px;width:1px;height:38px;background:#d2d6dd"></div>
<div style="position:absolute;left:519px;top:390px;width:488px;height:1px;background:#d2d6dd"></div>
<div class="d" style="right:482px;top:356px;text-align:right;">4</div>
<div class="d" style="left:555px;top:356px;">0000000006</div>
<div style="position:absolute;left:631px;top:371px;width:225px;height:1px;background:#ececec"></div>
<div class="d" style="left:635px;top:356px;width:219px;overflow:hidden">Иванова Татьяна Романовна</div>
<div class="d" style="left:635px;top:375px;width:219px;overflow:hidden">дек. 2011</div>
<div class="d" style="right:25px;top:356px;text-align:right;">5 276,37</div>
<div style="position:absolute;left:550px;top:391px;width:1px;height:38px;background:#d2d6dd"></div>
<div style="position:absolute;left:630px;top:391px;width:1px;height:38px;background:#d2d6dd"></div>
<div style="position:absolute;left:856px;top:391px;width:1px;height:38px;background:#d2d6dd"></div>
<div style="position:absolute;left:519px;top:428px;width:488px;height:1px;background:#d2d6dd"></div>
<div class="d" style="right:482px;top:394px;text-align:right;">5</div>
<div class="d" style="left:555px;top:394px;">0000000001</div>
<div style="position:absolute;left:631px;top:409px;width:225px;height:1px;background:#ececec"></div>
<div class="d" style="left:635px;top:394px;width:219px;overflow:hidden">Громова Жанна Борисовна</div>
<div class="d" style="left:635px;top:413px;width:219px;overflow:hidden">нояб. 2011</div>
<div class="d" style="right:25px;top:394px;text-align:right;">8 800,00</div>
<div style="position:absolute;left:550px;top:429px;width:1px;height:38px;background:#d2d6dd"></div>
<div style="position:absolute;left:630px;top:429px;width:1px;height:38px;background:#d2d6dd"></div>
<div style="position:absolute;left:856px;top:429px;width:1px;height:38px;background:#d2d6dd"></div>
<div style="position:absolute;left:519px;top:466px;width:488px;height:1px;background:#d2d6dd"></div>
<div class="d" style="right:482px;top:432px;text-align:right;">6</div>
<div class="d" style="left:555px;top:432px;">0000000002</div>
<div style="position:absolute;left:631px;top:447px;width:225px;height:1px;background:#ececec"></div>
<div class="d" style="left:635px;top:432px;width:219px;overflow:hidden">Жумабаева Алия Курмановна</div>
<div class="d" style="left:635px;top:451px;width:219px;overflow:hidden">нояб. 2011</div>
<div class="d" style="right:25px;top:432px;text-align:right;">8 363,64</div>
<div style="position:absolute;left:519px;top:547px;width:488px;height:1px;background:#c9c1a3"></div>
<div style="position:absolute;left:519px;top:548px;width:31px;height:20px;background:linear-gradient(#f6f2e2,#ebe4c9)"></div>
<div style="position:absolute;left:551px;top:548px;width:79px;height:20px;background:linear-gradient(#f6f2e2,#ebe4c9)"></div>
<div style="position:absolute;left:550px;top:548px;width:1px;height:20px;background:#c9c1a3"></div>
<div style="position:absolute;left:631px;top:548px;width:225px;height:20px;background:linear-gradient(#f6f2e2,#ebe4c9)"></div>
<div style="position:absolute;left:630px;top:548px;width:1px;height:20px;background:#c9c1a3"></div>
<div style="position:absolute;left:857px;top:548px;width:150px;height:20px;background:linear-gradient(#f6f2e2,#ebe4c9)"></div>
<div style="position:absolute;left:856px;top:548px;width:1px;height:20px;background:#c9c1a3"></div>
<div class="h" style="left:635px;top:551px;">Итого:</div>
<div class="h" style="right:25px;top:551px;text-align:right;">53 058,69</div>
<div class="t" style="left:12px;top:585px;">Комментарий:</div>
<div class="fld" style="left:103px;top:581px;width:913px;background:#fefdf8"></div>
<div style="position:absolute;left:4px;top:608px;width:1020px;height:1px;background:#bdb59b"></div>
<div style="position:absolute;left:4px;top:609px;width:1020px;height:24px;background:#f4f1e2"></div>
<div class="t" style="left:12px;top:615px;color:#1e2468">Павлов А.В. (Администратор)</div>
<div style="position:absolute;left:881px;top:614px;font:bold 11px 'Liberation Sans';line-height:13px;color:#3c3829;transform:scaleY(1.1);transform-origin:0 0;letter-spacing:0.3px">OK</div>
<div class="sep" style="left:904px;top:613px"></div>
<div class="t" style="left:912px;top:615px;color:#3c3829">Записать</div>
<div class="sep" style="left:966px;top:613px"></div>
<div class="t" style="left:974px;top:615px;color:#3c3829">Закрыть</div>
</div></body></html>
